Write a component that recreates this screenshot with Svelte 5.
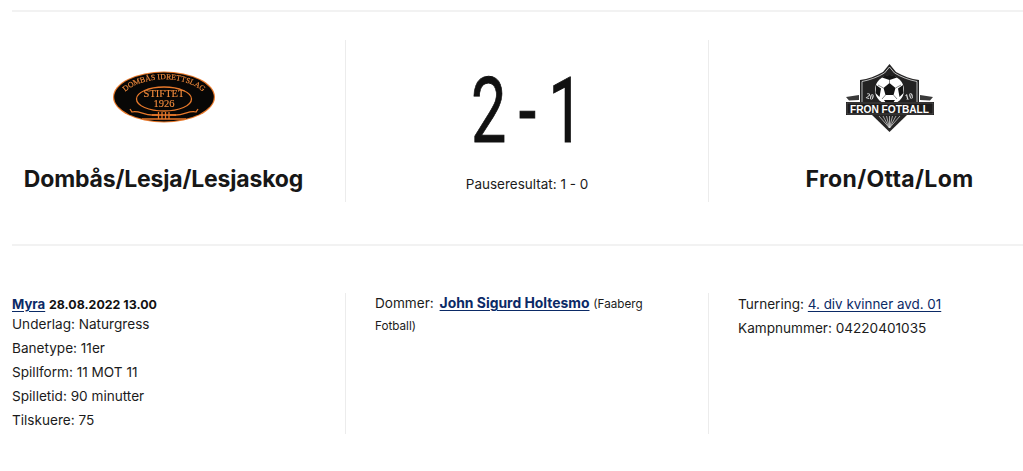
<script>
  const details = ['Underlag: Naturgress', 'Banetype: 11er', 'Spillform: 11 MOT 11', 'Spilletid: 90 minutter', 'Tilskuere: 75'];
</script>

<main class="page">
  <section class="teams">
    <div class="team">
      <div class="logo">
        <svg class="raster" width="104" height="56" viewBox="0 0 104 56" aria-label="Dombås Idrettslag">
          <defs>
            <path id="arc" d="M6 32 C20 3 84 3 98 32" />
            <clipPath id="oval"><ellipse cx="52" cy="28" rx="50" ry="25" /></clipPath>
          </defs>
          <ellipse cx="52" cy="28" rx="51" ry="25.5" fill="#e8792b" />
          <ellipse cx="52" cy="28" rx="49.8" ry="24.4" fill="#080706" />
          <text class="arc-text"><textPath href="#arc" startOffset="50%" text-anchor="middle">DOMBÅS IDRETTSLAG</textPath></text>
          <ellipse cx="52" cy="30" rx="27.5" ry="12" fill="none" stroke="#e8792b" stroke-width="1.3" />
          <text class="center-text" x="52" y="28" text-anchor="middle">STIFTET</text>
          <text class="center-text" x="52" y="37.5" text-anchor="middle">1926</text>
          <g clip-path="url(#oval)" fill="none" stroke="#e8792b" stroke-width="1.3">
            <path d="M18 40 L20 43 C26 41 32 46 40 46 L46 46 M58 46 L64 46 C72 46 78 41 84 43 L86 40" />
            <path d="M46.5 43 V50 M50 43 V50 M53.5 43 V50 M57 43 V50" />
            <path d="M40 46 H64" />
            <path d="M30 50 H74" />
          </g>
        </svg>
      </div>
      <h2>Dombås/Lesja/Lesjaskog</h2>
    </div>

    <div class="team score-col">
      <div class="score"><span>2 - 1</span></div>
      <p class="pause">Pauseresultat: 1 - 0</p>
    </div>

    <div class="team">
      <div class="logo">
        <svg class="raster" width="90" height="70" viewBox="0 0 90 70" aria-label="Fron Fotball">
          <path d="M44.5 0 L51 8 C58 12 66 15 74 16 L74 40 L15 40 L15 16 C23 15 31 12 38 8 Z" fill="#232222" />
          <path d="M44.5 3 L49.5 9 C56 13 64 16 72 17.500 L72 40 L17 40 L17 17.500 C25 16 33 13 39.500 9 Z" fill="none" stroke="#fff" stroke-width="0.7" />
          <circle cx="44.500" cy="26" r="14.500" fill="#fff" />
          <path d="M38.500 24 L44.500 19 L50.500 24 L48.500 31 L40.500 31 Z" fill="#141414" />
          <path d="M37 13.500 L44.500 16 L52 13.500 L49 11.500 Q44.500 10.500 40 11.500 Z M31 21 L36 24.500 L34.500 33 L30.500 29 Z M58 21 L53 24.500 L54.500 33 L58.500 29 Z M39 36 L50 36 L48 39 L41 39 Z" fill="#141414" />
          <path d="M38.500 24 L33 21 M50.500 24 L56 21 M44.500 19 V16 M40.500 31 L37 35 M48.500 31 L52 35" stroke="#666" stroke-width="0.8" />
          <text class="year" x="25" y="35" transform="rotate(14 25 32)" text-anchor="middle">20</text>
          <text class="year" x="64" y="35" transform="rotate(-14 64 32)" text-anchor="middle">10</text>
          <path d="M1 33 L14 31 L14 36 L4 36.500 Z M88 33 L75 31 L75 36 L85 36.500 Z" fill="#3a3a3a" />
          <path d="M26 50 L63 50 L44.500 68 Z" fill="#262525" />
          <path d="M44.500 64 L34 52 M44.500 64 L38 52 M44.500 64 L41.500 52 M44.500 64 L44.500 52 M44.500 64 L47.500 52 M44.500 64 L51 52 M44.500 64 L55 52" stroke="#ddd" stroke-width="0.7" />
          <rect x="1" y="38" width="88" height="13" fill="#1c1b1b" />
          <rect x="2" y="39" width="86" height="11" fill="none" stroke="#777" stroke-width="0.5" />
          <text class="fron" x="44.500" y="48.500" text-anchor="middle" textLength="79" lengthAdjust="spacingAndGlyphs">FRON FOTBALL</text>
        </svg>
      </div>
      <h2 class="wide">Fron/Otta/Lom</h2>
    </div>
  </section>

  <section class="info">
    <div class="col first">
      <p class="head"><a href="#myra">Myra</a> <b>28.08.2022 13.00</b></p>
      {#each details as d}
        <p class="row">{d}</p>
      {/each}
    </div>
    <div class="col">
      <p class="judge">Dommer: <a href="#dommer"><b>John Sigurd Holtesmo</b></a> <small>(Faaberg Fotball)</small></p>
    </div>
    <div class="col">
      <p class="row">Turnering: <a class="league" href="#turnering">4. div kvinner avd. 01</a></p>
      <p class="row">Kampnummer: 04220401035</p>
    </div>
  </section>
</main>

<style>
  :global(body) {
    margin: 0;
    background: #fff;
    color: #1b1b1b;
    font-family: Inter, "Noto Sans", sans-serif;
  }
  .page {
    padding: 10px 0 0 12px;
    width: 1011px;
    overflow: hidden;
  }
  .teams {
    display: grid;
    grid-template-columns: 333px 363px 315px;
    border-top: 2px solid #f2f2f2;
    border-bottom: 2px solid #f2f2f2;
    padding: 28px 0 42px;
    height: 162px;
  }
  .team {
    display: flex;
    flex-direction: column;
    align-items: center;
    padding-right: 30px;
  }
  .team + .team {
    border-left: 1px solid #ececec;
  }
  .team:last-child {
    padding-right: 0;
    padding-left: 47px;
  }
  .logo {
    height: 116px;
    display: flex;
    align-items: center;
    justify-content: center;
  }
  .raster { filter: blur(0.35px); }
  .team:first-child .logo svg { margin-top: -2px; }
  .team:last-child .logo svg { margin-top: 2px; }
  h2 {
    margin: 0;
    font-size: 23px;
    font-weight: 700;
    line-height: 46px;
    letter-spacing: -0.18px;
    white-space: nowrap;
    color: #171717;
  }
  h2.wide { letter-spacing: 0.35px; }
  .score-col {
    padding-right: 0;
  }
  .score {
    height: 108px;
    padding-top: 18px;
    width: 100%;
    display: flex;
    align-items: center;
    justify-content: center;
    color: #111;
  }
  .score span {
    font-family: Roboto, sans-serif;
    font-size: 90px;
    line-height: 1;
    transform: scaleX(0.7);
    white-space: pre;
    word-spacing: -5px;
    -webkit-text-stroke: 0.8px #111;
  }
  .pause {
    margin: 8px 0 0;
    font-size: 13.5px;
    line-height: 20px;
  }
  .info {
    display: grid;
    grid-template-columns: 333px 363px 315px;
    padding-top: 47px;
  }
  .col {
    height: 141px;
    padding-left: 29px;
    border-left: 1px solid #ececec;
    box-sizing: border-box;
  }
  .col.first {
    border-left: 0;
    padding-left: 0;
  }
  p { margin: 0; }
  .head {
    font-size: 13.2px;
    line-height: 22px;
    margin-bottom: -4px;
  }
  .head b { color: #111; font-weight: 700; font-size: 12.4px; }
  .head a { font-weight: 700; }
  .row {
    font-size: 13.6px;
    line-height: 24px;
  }
  .col:not(.first) .row:first-child { margin-top: -1px; }
  .judge {
    width: 300px;
    font-size: 13.6px;
    line-height: 21px;
  }
  .judge a { margin-left: 2px; }
  .judge b { font-size: 13.9px; }
  .judge small { font-size: 11.7px; }
  .league { font-size: 13.4px; }
  a {
    color: #0b2a66;
    text-decoration: underline;
    text-underline-offset: 2px;
  }
  .arc-text {
    font-family: "Liberation Serif", serif;
    font-size: 7.8px;
    fill: #f08a3c;
    stroke: #f08a3c;
    stroke-width: 0.15px;
  }
  .center-text {
    font-family: "Liberation Serif", serif;
    font-size: 10.5px;
    fill: #f08a3c;
    stroke: #f08a3c;
    stroke-width: 0.15px;
  }
  .year {
    font-family: "Liberation Serif", serif;
    font-size: 8px;
    font-weight: 700;
    fill: #ddd;
  }
  .fron {
    font-family: "Liberation Sans", sans-serif;
    font-size: 10.5px;
    font-weight: 700;
    fill: #fff;
  }
</style>
